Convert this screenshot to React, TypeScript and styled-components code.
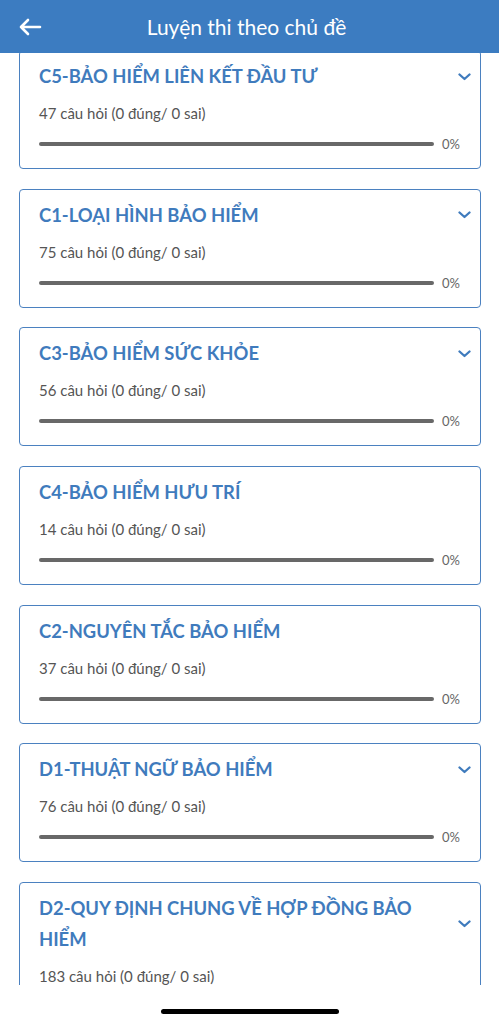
import React from 'react'
import styled, { createGlobalStyle } from 'styled-components'

const GlobalStyle = createGlobalStyle`
	html, body {
		margin: 0;
		padding: 0;
		background: #ffffff;
		font-family: Lato, 'Noto Sans', sans-serif;
	}
`

const Screen = styled.div`
	width: 499px;
	height: 1024px;
	display: flex;
	flex-direction: column;
	background: #ffffff;
	overflow: hidden;
`

const Header = styled.header`
	height: 53px;
	flex-shrink: 0;
	background: #3c7cc1;
	display: grid;
	grid-template-columns: 60px 1fr 60px;
	align-items: center;
	position: relative;
	z-index: 2;
`

const BackButton = styled.button`
	border: 0;
	background: transparent;
	padding: 0 0 0 18px;
	display: flex;
	align-items: center;
	height: 100%;
	cursor: pointer;
`

const Title = styled.h1`
	margin: 0;
	padding-right: 6px;
	text-align: center;
	color: #ffffff;
	font-size: 21px;
	font-weight: 400;
`

const Scroller = styled.main`
	height: 932px;
	overflow: hidden;
`

const List = styled.div`
	margin-top: -3px;
	padding: 0 18px 0 19px;
	display: flex;
	flex-direction: column;
	gap: 19.7px;
`

const Card = styled.section`
	min-height: 119px;
	box-sizing: border-box;
	border: 1px solid #4b81c0;
	border-radius: 4px;
	padding: 10px 9px 16px 19px;
	display: flex;
	flex-direction: column;
`

const TitleRow = styled.div`
	display: flex;
	align-items: center;
	gap: 16px;
`

const CardTitle = styled.h2`
	flex: 1;
	margin: 0;
	color: #3f7bbd;
	font-size: 18.4px;
	font-weight: 700;
	line-height: 31px;
	max-width: 400px;
`

const Chevron = styled.span<{ $hidden?: boolean }>`
	width: 13px;
	margin-left: auto;
	display: flex;
	visibility: ${(p) => (p.$hidden ? 'hidden' : 'visible')};
`

const Count = styled.p`
	margin: 11px 0 0;
	color: #555555;
	font-size: 15px;
	line-height: 20px;
`

const ProgressRow = styled.div`
	margin-top: 13px;
	padding-right: 11px;
	display: flex;
	align-items: center;
	gap: 8px;
	height: 16px;
`

const Track = styled.div`
	flex: 1;
	height: 4px;
	border-radius: 2px;
	background: #686868;
	overflow: hidden;
`

const Fill = styled.div`
	height: 100%;
	background: #3f7bbd;
`

const Percent = styled.span`
	color: #666666;
	font-size: 13px;
	width: 18px;
	text-align: right;
`

const Footer = styled.footer`
	flex: 1;
	display: flex;
	justify-content: center;
	align-items: flex-end;
	padding-bottom: 10px;
	background: #ffffff;
`

const HomeBar = styled.div`
	width: 178px;
	height: 5px;
	border-radius: 3px;
	background: #000000;
`

type Topic = {
	title: string
	total: number
	right: number
	wrong: number
	expandable: boolean
}

const topics: Topic[] = [
	{ title: 'C5-BẢO HIỂM LIÊN KẾT ĐẦU TƯ', total: 47, right: 0, wrong: 0, expandable: true },
	{ title: 'C1-LOẠI HÌNH BẢO HIỂM', total: 75, right: 0, wrong: 0, expandable: true },
	{ title: 'C3-BẢO HIỂM SỨC KHỎE', total: 56, right: 0, wrong: 0, expandable: true },
	{ title: 'C4-BẢO HIỂM HƯU TRÍ', total: 14, right: 0, wrong: 0, expandable: false },
	{ title: 'C2-NGUYÊN TẮC BẢO HIỂM', total: 37, right: 0, wrong: 0, expandable: false },
	{ title: 'D1-THUẬT NGỮ BẢO HIỂM', total: 76, right: 0, wrong: 0, expandable: true },
	{ title: 'D2-QUY ĐỊNH CHUNG VỀ HỢP ĐỒNG BẢO HIỂM', total: 183, right: 0, wrong: 0, expandable: true },
]

function ChevronDown() {
	return (
		<svg width="13" height="8" viewBox="0 0 13 8" fill="none">
			<polyline
				points="1.5,1.5 6.5,6 11.5,1.5"
				stroke="#3f7bbd"
				strokeWidth="2.3"
				strokeLinecap="round"
				strokeLinejoin="round"
			/>
		</svg>
	)
}

function TopicCard({ topic }: { topic: Topic }) {
	const pct = topic.total ? Math.round(((topic.right + topic.wrong) / topic.total) * 100) : 0
	return (
		<Card>
			<TitleRow>
				<CardTitle>{topic.title}</CardTitle>
				<Chevron $hidden={!topic.expandable}>
					<ChevronDown />
				</Chevron>
			</TitleRow>
			<Count>
				{topic.total} câu hỏi ({topic.right} đúng/ {topic.wrong} sai)
			</Count>
			<ProgressRow>
				<Track>
					<Fill style={{ width: `${pct}%` }} />
				</Track>
				<Percent>{pct}%</Percent>
			</ProgressRow>
		</Card>
	)
}

export default function App() {
	return (
		<Screen>
			<GlobalStyle />
			<Header>
				<BackButton aria-label="back">
					<svg width="24" height="18" viewBox="0 0 24 18" fill="none">
						<path
							d="M22 9H3M10 2L3 9l7 7"
							stroke="#ffffff"
							strokeWidth="2.6"
							strokeLinecap="round"
							strokeLinejoin="round"
						/>
					</svg>
				</BackButton>
				<Title>Luyện thi theo chủ đề</Title>
				<span />
			</Header>
			<Scroller>
				<List>
					{topics.map((t) => (
						<TopicCard key={t.title} topic={t} />
					))}
				</List>
			</Scroller>
			<Footer>
				<HomeBar />
			</Footer>
		</Screen>
	)
}
